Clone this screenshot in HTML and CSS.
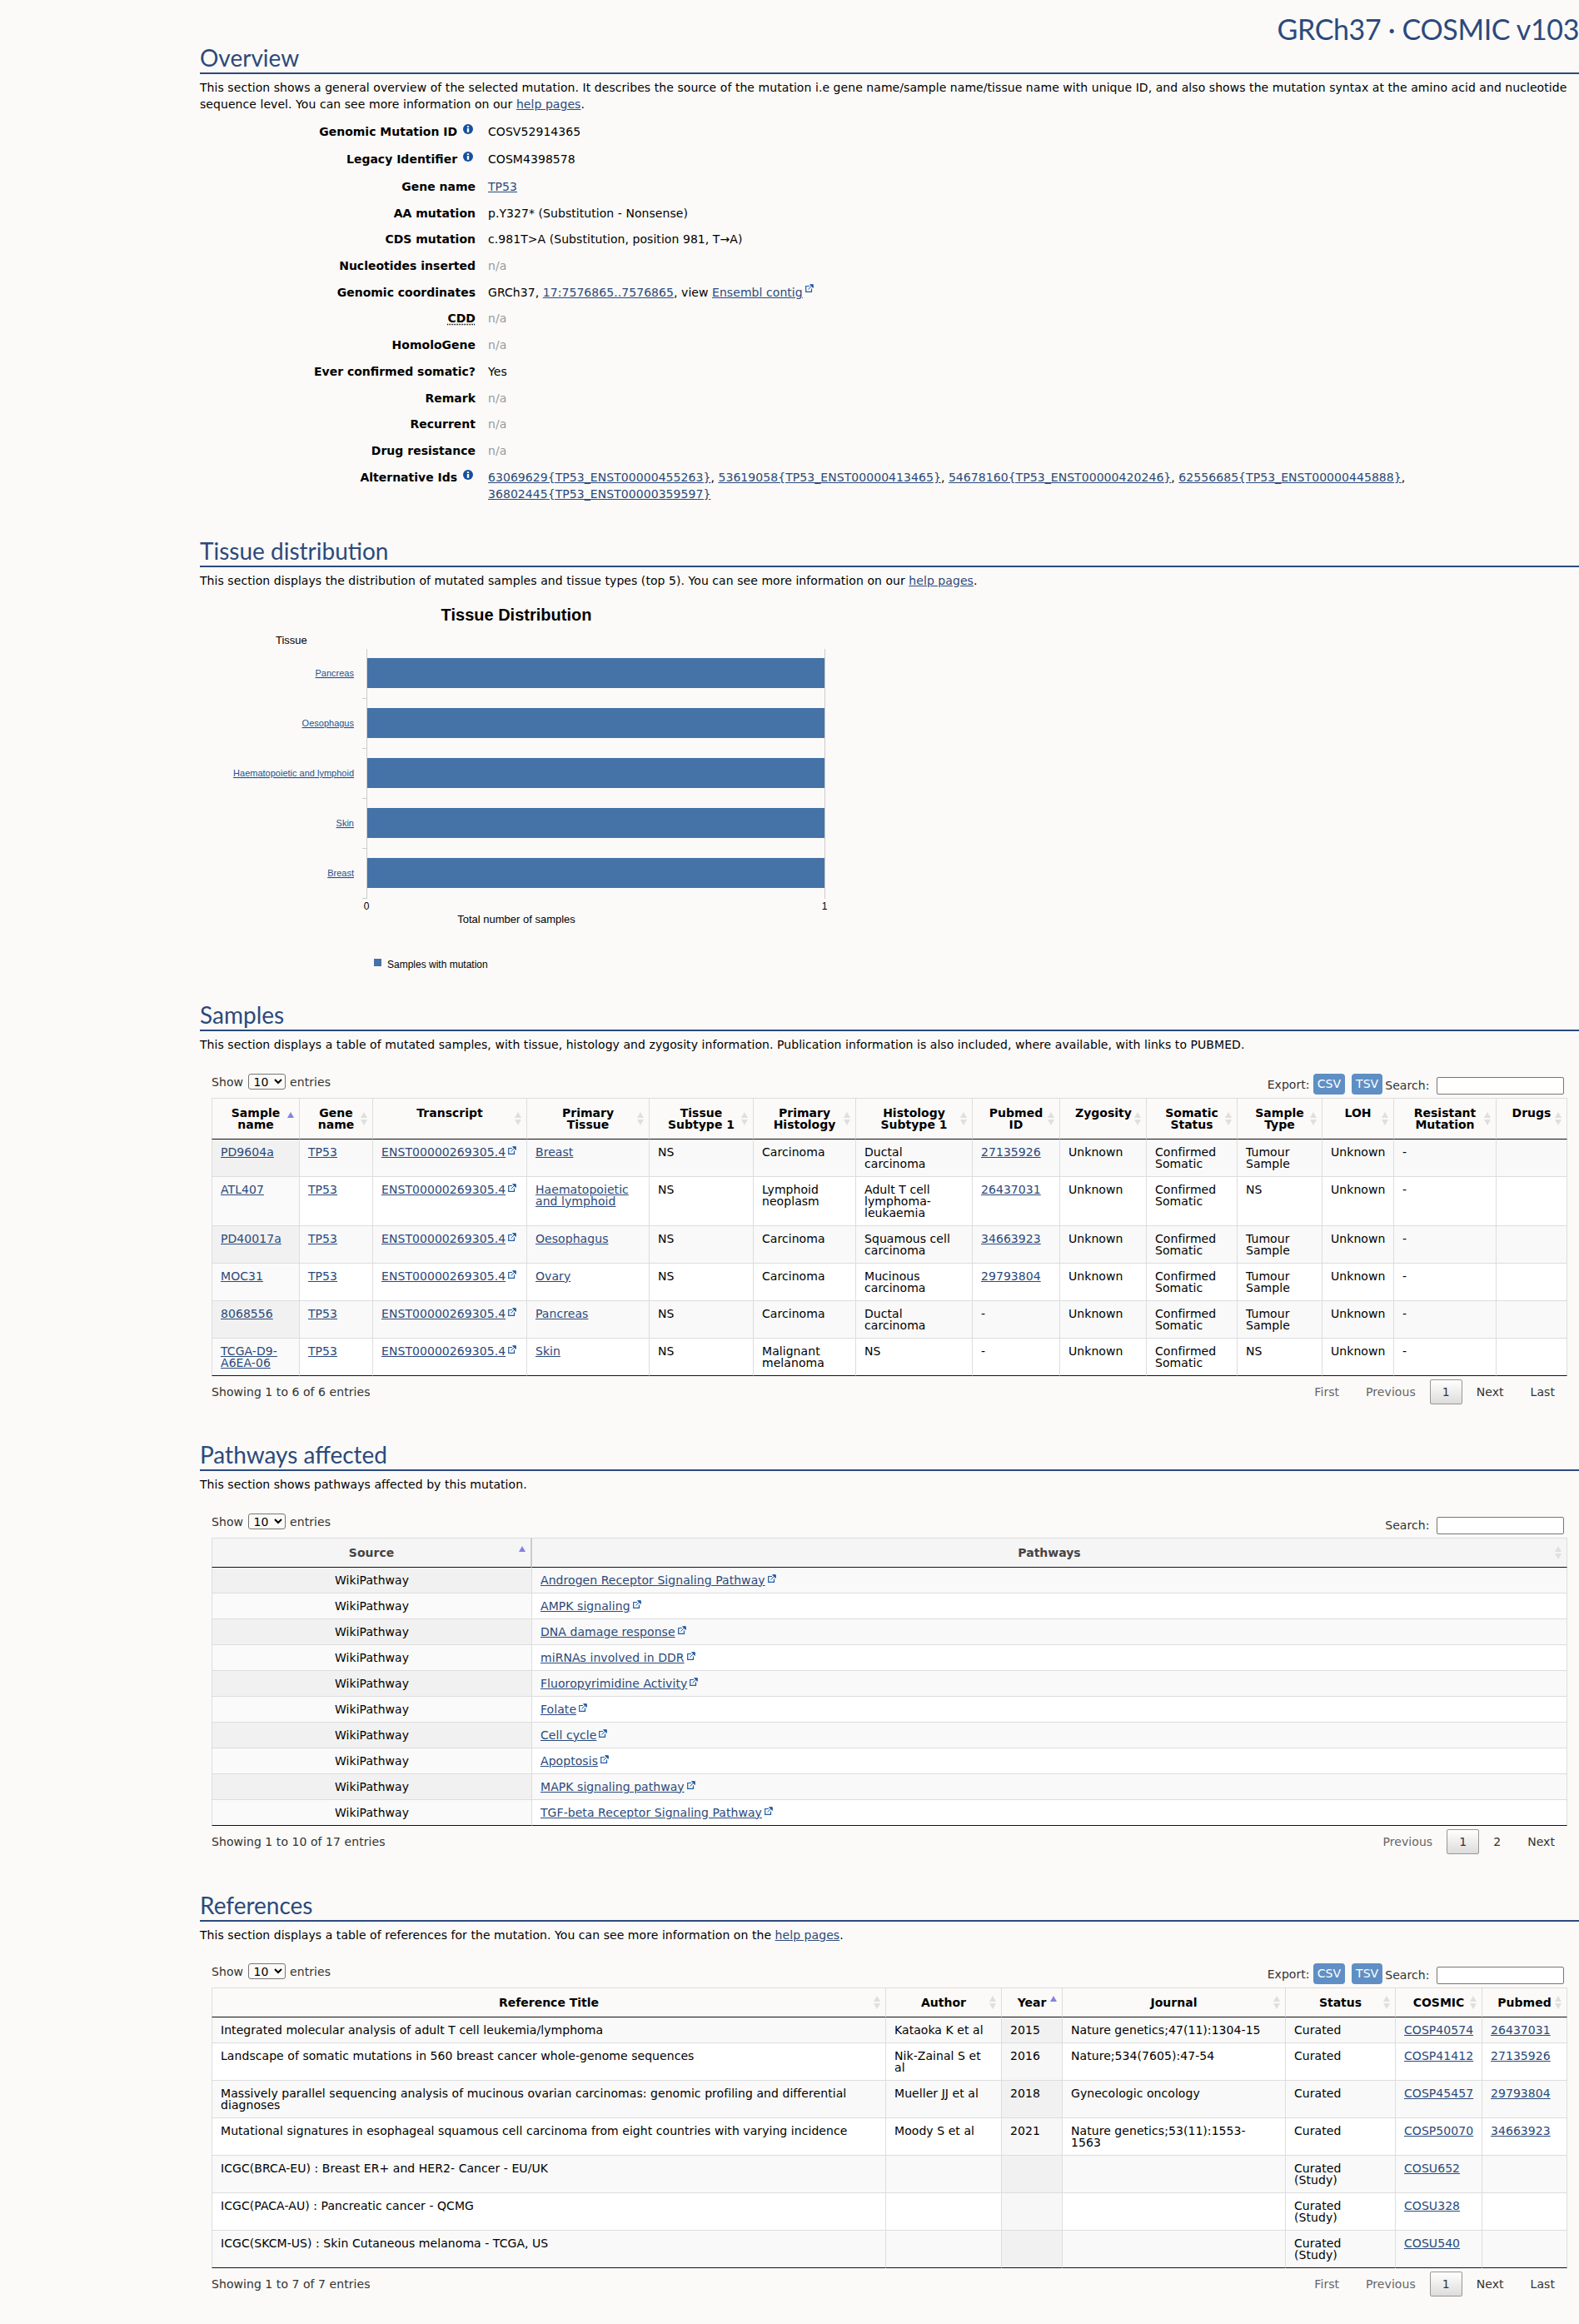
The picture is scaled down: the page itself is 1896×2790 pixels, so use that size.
FILE: index.html
```html
<!DOCTYPE html>
<html lang="en">
<head>
<meta charset="utf-8">
<title>GRCh37 · COSMIC v103</title>
<link rel="stylesheet" href="styles.css">
</head>
<body>
<svg class="defs" width="0" height="0" aria-hidden="true">
  <symbol id="ext" viewBox="0 0 10 10"><path d="M5 2.5H.7v6.8h6.8V5.5" fill="none" stroke="currentColor" stroke-width="1.2"/><path d="M3.5 6.5L8 2M5.6.7h3.7v3.7z" fill="currentColor" stroke="currentColor" stroke-width="1"/></symbol>
  <symbol id="info" viewBox="0 0 12 12"><circle cx="6" cy="6" r="6" fill="currentColor"/><path d="M4.8 2.2h2.4v1.7H4.8zM4.8 5h2.4v4.8H4.8z" fill="#fff"/></symbol>
</svg>
<main class="page">
  <div class="release"><span>GRCh37 · COSMIC v103</span></div>

  <section class="section">
    <h2 class="heading">Overview</h2>
    <p class="intro">This section shows a general overview of the selected mutation. It describes the source of the mutation i.e gene name/sample name/tissue name with unique ID, and also shows the mutation syntax at the amino acid and nucleotide sequence level. You can see more information on our <a href="#">help pages</a>.</p>
    <div class="facts">
      <div class="fact tall"><div class="fact-label">Genomic Mutation ID <svg class="i-info"><use href="#info"/></svg></div><div class="fact-value">COSV52914365</div></div>
      <div class="fact tall"><div class="fact-label">Legacy Identifier <svg class="i-info"><use href="#info"/></svg></div><div class="fact-value">COSM4398578</div></div>
      <div class="fact"><div class="fact-label">Gene name</div><div class="fact-value"><a href="#">TP53</a></div></div>
      <div class="fact"><div class="fact-label">AA mutation</div><div class="fact-value">p.Y327* (Substitution - Nonsense)</div></div>
      <div class="fact"><div class="fact-label">CDS mutation</div><div class="fact-value">c.981T&gt;A (Substitution, position 981, T→A)</div></div>
      <div class="fact"><div class="fact-label">Nucleotides inserted</div><div class="fact-value na">n/a</div></div>
      <div class="fact"><div class="fact-label">Genomic coordinates</div><div class="fact-value">GRCh37, <a href="#">17:7576865..7576865</a>, view <a href="#">Ensembl contig</a><svg class="i-ext"><use href="#ext"/></svg></div></div>
      <div class="fact"><div class="fact-label"><abbr class="abbr">CDD</abbr></div><div class="fact-value na">n/a</div></div>
      <div class="fact"><div class="fact-label">HomoloGene</div><div class="fact-value na">n/a</div></div>
      <div class="fact"><div class="fact-label">Ever confirmed somatic?</div><div class="fact-value">Yes</div></div>
      <div class="fact"><div class="fact-label">Remark</div><div class="fact-value na">n/a</div></div>
      <div class="fact"><div class="fact-label">Recurrent</div><div class="fact-value na">n/a</div></div>
      <div class="fact"><div class="fact-label">Drug resistance</div><div class="fact-value na">n/a</div></div>
      <div class="fact"><div class="fact-label">Alternative Ids <svg class="i-info"><use href="#info"/></svg></div><div class="fact-value"><a href="#">63069629{TP53_ENST00000455263}</a>, <a href="#">53619058{TP53_ENST00000413465}</a>, <a href="#">54678160{TP53_ENST00000420246}</a>, <a href="#">62556685{TP53_ENST00000445888}</a>, <a href="#">36802445{TP53_ENST00000359597}</a></div></div>
    </div>
  </section>

  <section class="section s-tissue">
    <h2 class="heading">Tissue distribution</h2>
    <p class="intro">This section displays the distribution of mutated samples and tissue types (top 5). You can see more information on our <a href="#">help pages</a>.</p>
    <svg class="chart" viewBox="240 707 800 473" width="800" height="473">
      <text class="c-title" x="620" y="745" text-anchor="middle">Tissue Distribution</text>
      <text class="c-axis" x="331" y="773">Tissue</text>
      <g class="c-bars">
        <rect x="440" y="790" width="550" height="36"/>
        <rect x="440" y="850" width="550" height="36"/>
        <rect x="440" y="910" width="550" height="36"/>
        <rect x="440" y="970" width="550" height="36"/>
        <rect x="440" y="1030" width="550" height="36"/>
      </g>
      <path class="c-grid" d="M440.5 779V1079M990.5 779V1079M435 838.5h5M435 898.5h5M435 958.5h5M435 1018.5h5M435 1078.5h5"/>
      <g class="c-links" text-anchor="end">
        <text x="425" y="812">Pancreas</text>
        <text x="425" y="872">Oesophagus</text>
        <text x="425" y="932">Haematopoietic and lymphoid</text>
        <text x="425" y="992">Skin</text>
        <text x="425" y="1052">Breast</text>
      </g>
      <text class="c-small" x="440" y="1092" text-anchor="middle">0</text>
      <text class="c-small" x="990" y="1092" text-anchor="middle">1</text>
      <text class="c-axis" x="620" y="1108" text-anchor="middle">Total number of samples</text>
      <rect class="c-legend" x="449" y="1151" width="9" height="9"/>
      <text class="c-small" x="465" y="1162">Samples with mutation</text>
    </svg>
  </section>

  <section class="section s-samples">
    <h2 class="heading">Samples</h2>
    <p class="intro">This section displays a table of mutated samples, with tissue, histology and zygosity information. Publication information is also included, where available, with links to PUBMED.</p>
    <div class="dt">
      <div class="dt-top">
        <label class="dt-length">Show <select class="dt-select"><option>10</option></select> entries</label>
        <div class="dt-tools">
          <span class="dt-export">Export:</span><a class="btn" href="#">CSV</a><a class="btn" href="#">TSV</a>
          <label class="dt-search">Search: <input class="dt-input" type="text"></label>
        </div>
      </div>
      <table class="grid t-samples">
        <thead><tr>
          <th class="sorted">Sample name</th><th>Gene name</th><th>Transcript</th><th>Primary Tissue</th><th>Tissue Subtype 1</th><th>Primary Histology</th><th>Histology Subtype 1</th><th>Pubmed ID</th><th>Zygosity</th><th>Somatic Status</th><th>Sample Type</th><th>LOH</th><th>Resistant Mutation</th><th>Drugs</th>
        </tr></thead>
        <tbody>
          <tr><td><a href="#">PD9604a</a></td><td><a href="#">TP53</a></td><td><a href="#">ENST00000269305.4</a><svg class="i-ext"><use href="#ext"/></svg></td><td><a href="#">Breast</a></td><td>NS</td><td>Carcinoma</td><td>Ductal carcinoma</td><td><a href="#">27135926</a></td><td>Unknown</td><td>Confirmed Somatic</td><td>Tumour Sample</td><td>Unknown</td><td>-</td><td></td></tr>
          <tr><td><a href="#">ATL407</a></td><td><a href="#">TP53</a></td><td><a href="#">ENST00000269305.4</a><svg class="i-ext"><use href="#ext"/></svg></td><td><a href="#">Haematopoietic and lymphoid</a></td><td>NS</td><td>Lymphoid neoplasm</td><td>Adult T cell lymphoma-leukaemia</td><td><a href="#">26437031</a></td><td>Unknown</td><td>Confirmed Somatic</td><td>NS</td><td>Unknown</td><td>-</td><td></td></tr>
          <tr><td><a href="#">PD40017a</a></td><td><a href="#">TP53</a></td><td><a href="#">ENST00000269305.4</a><svg class="i-ext"><use href="#ext"/></svg></td><td><a href="#">Oesophagus</a></td><td>NS</td><td>Carcinoma</td><td>Squamous cell carcinoma</td><td><a href="#">34663923</a></td><td>Unknown</td><td>Confirmed Somatic</td><td>Tumour Sample</td><td>Unknown</td><td>-</td><td></td></tr>
          <tr><td><a href="#">MOC31</a></td><td><a href="#">TP53</a></td><td><a href="#">ENST00000269305.4</a><svg class="i-ext"><use href="#ext"/></svg></td><td><a href="#">Ovary</a></td><td>NS</td><td>Carcinoma</td><td>Mucinous carcinoma</td><td><a href="#">29793804</a></td><td>Unknown</td><td>Confirmed Somatic</td><td>Tumour Sample</td><td>Unknown</td><td>-</td><td></td></tr>
          <tr><td><a href="#">8068556</a></td><td><a href="#">TP53</a></td><td><a href="#">ENST00000269305.4</a><svg class="i-ext"><use href="#ext"/></svg></td><td><a href="#">Pancreas</a></td><td>NS</td><td>Carcinoma</td><td>Ductal carcinoma</td><td>-</td><td>Unknown</td><td>Confirmed Somatic</td><td>Tumour Sample</td><td>Unknown</td><td>-</td><td></td></tr>
          <tr><td><a href="#">TCGA-D9-A6EA-06</a></td><td><a href="#">TP53</a></td><td><a href="#">ENST00000269305.4</a><svg class="i-ext"><use href="#ext"/></svg></td><td><a href="#">Skin</a></td><td>NS</td><td>Malignant melanoma</td><td>NS</td><td>-</td><td>Unknown</td><td>Confirmed Somatic</td><td>NS</td><td>Unknown</td><td>-</td><td></td></tr>
        </tbody>
      </table>
      <div class="dt-foot">
        <div class="dt-info">Showing 1 to 6 of 6 entries</div>
        <div class="pager"><span class="pg off">First</span><span class="pg off">Previous</span><span class="pg cur">1</span><span class="pg">Next</span><span class="pg">Last</span></div>
      </div>
    </div>
  </section>

  <section class="section s-paths">
    <h2 class="heading">Pathways affected</h2>
    <p class="intro">This section shows pathways affected by this mutation.</p>
    <div class="dt">
      <div class="dt-top">
        <label class="dt-length">Show <select class="dt-select"><option>10</option></select> entries</label>
        <div class="dt-tools"><label class="dt-search">Search: <input class="dt-input" type="text"></label></div>
      </div>
      <table class="grid t-paths">
        <thead><tr><th class="sorted">Source</th><th>Pathways</th></tr></thead>
        <tbody>
          <tr><td>WikiPathway</td><td><a href="#">Androgen Receptor Signaling Pathway</a><svg class="i-ext"><use href="#ext"/></svg></td></tr>
          <tr><td>WikiPathway</td><td><a href="#">AMPK signaling</a><svg class="i-ext"><use href="#ext"/></svg></td></tr>
          <tr><td>WikiPathway</td><td><a href="#">DNA damage response</a><svg class="i-ext"><use href="#ext"/></svg></td></tr>
          <tr><td>WikiPathway</td><td><a href="#">miRNAs involved in DDR</a><svg class="i-ext"><use href="#ext"/></svg></td></tr>
          <tr><td>WikiPathway</td><td><a href="#">Fluoropyrimidine Activity</a><svg class="i-ext"><use href="#ext"/></svg></td></tr>
          <tr><td>WikiPathway</td><td><a href="#">Folate</a><svg class="i-ext"><use href="#ext"/></svg></td></tr>
          <tr><td>WikiPathway</td><td><a href="#">Cell cycle</a><svg class="i-ext"><use href="#ext"/></svg></td></tr>
          <tr><td>WikiPathway</td><td><a href="#">Apoptosis</a><svg class="i-ext"><use href="#ext"/></svg></td></tr>
          <tr><td>WikiPathway</td><td><a href="#">MAPK signaling pathway</a><svg class="i-ext"><use href="#ext"/></svg></td></tr>
          <tr><td>WikiPathway</td><td><a href="#">TGF-beta Receptor Signaling Pathway</a><svg class="i-ext"><use href="#ext"/></svg></td></tr>
        </tbody>
      </table>
      <div class="dt-foot">
        <div class="dt-info">Showing 1 to 10 of 17 entries</div>
        <div class="pager"><span class="pg off">Previous</span><span class="pg cur">1</span><span class="pg">2</span><span class="pg">Next</span></div>
      </div>
    </div>
  </section>

  <section class="section s-refs">
    <h2 class="heading">References</h2>
    <p class="intro">This section displays a table of references for the mutation. You can see more information on the <a href="#">help pages</a>.</p>
    <div class="dt">
      <div class="dt-top">
        <label class="dt-length">Show <select class="dt-select"><option>10</option></select> entries</label>
        <div class="dt-tools">
          <span class="dt-export">Export:</span><a class="btn" href="#">CSV</a><a class="btn" href="#">TSV</a>
          <label class="dt-search">Search: <input class="dt-input" type="text"></label>
        </div>
      </div>
      <table class="grid t-refs">
        <thead><tr><th>Reference Title</th><th>Author</th><th class="sorted">Year</th><th>Journal</th><th>Status</th><th>COSMIC</th><th>Pubmed</th></tr></thead>
        <tbody>
          <tr><td>Integrated molecular analysis of adult T cell leukemia/lymphoma</td><td>Kataoka K et al</td><td>2015</td><td>Nature genetics;47(11):1304-15</td><td>Curated</td><td><a href="#">COSP40574</a></td><td><a href="#">26437031</a></td></tr>
          <tr><td>Landscape of somatic mutations in 560 breast cancer whole-genome sequences</td><td>Nik-Zainal S et al</td><td>2016</td><td>Nature;534(7605):47-54</td><td>Curated</td><td><a href="#">COSP41412</a></td><td><a href="#">27135926</a></td></tr>
          <tr><td>Massively parallel sequencing analysis of mucinous ovarian carcinomas: genomic profiling and differential diagnoses</td><td>Mueller JJ et al</td><td>2018</td><td>Gynecologic oncology</td><td>Curated</td><td><a href="#">COSP45457</a></td><td><a href="#">29793804</a></td></tr>
          <tr><td>Mutational signatures in esophageal squamous cell carcinoma from eight countries with varying incidence</td><td>Moody S et al</td><td>2021</td><td>Nature genetics;53(11):1553-<br>1563</td><td>Curated</td><td><a href="#">COSP50070</a></td><td><a href="#">34663923</a></td></tr>
          <tr><td>ICGC(BRCA-EU) : Breast ER+ and HER2- Cancer - EU/UK</td><td></td><td></td><td></td><td>Curated (Study)</td><td><a href="#">COSU652</a></td><td></td></tr>
          <tr><td>ICGC(PACA-AU) : Pancreatic cancer - QCMG</td><td></td><td></td><td></td><td>Curated (Study)</td><td><a href="#">COSU328</a></td><td></td></tr>
          <tr><td>ICGC(SKCM-US) : Skin Cutaneous melanoma - TCGA, US</td><td></td><td></td><td></td><td>Curated (Study)</td><td><a href="#">COSU540</a></td><td></td></tr>
        </tbody>
      </table>
      <div class="dt-foot">
        <div class="dt-info">Showing 1 to 7 of 7 entries</div>
        <div class="pager"><span class="pg off">First</span><span class="pg off">Previous</span><span class="pg cur">1</span><span class="pg">Next</span><span class="pg">Last</span></div>
      </div>
    </div>
  </section>
</main>
</body>
</html>
```
FILE: styles.css
```css
* { box-sizing: border-box; }
html, body { margin: 0; padding: 0; }
body {
  background: #fbfaf8;
  color: #000;
  font: 14px/20px "DejaVu Sans", Verdana, sans-serif;
  letter-spacing: .06px;
  height: 2790px;
  overflow-x: hidden;
}
a { color: #2b4a7b; text-decoration: underline; }
.defs { position: absolute; }
.page { margin-left: 240px; width: 1656px; }

.release {
  display: flex;
  justify-content: flex-end;
  height: 51px;
  padding: 19px 0 0 0;
  font: 400 34px/32px Lato, sans-serif;
  letter-spacing: -.35px;
  color: #2c4a7c;
}
.heading {
  margin: 0;
  height: 38px;
  font: 400 28px/36px Lato, sans-serif;
  letter-spacing: 0;
  color: #2c4a7c;
  border-bottom: 2px solid #2c4a7c;
}
.intro { margin: 6px 0 0; }

.facts { margin-top: 13px; }
.fact { display: flex; gap: 15px; min-height: 31.7px; }
.fact.tall { min-height: 33px; }
.fact-label { width: 331px; flex: none; text-align: right; font-weight: 700; letter-spacing: 0; }
.fact-value { flex: 1; min-width: 0; }
.na { color: #999; }
.abbr { text-decoration: underline dotted; }
.i-info { width: 12px; height: 12px; margin-left: 2px; margin-right: 3px; vertical-align: 2px; color: #15509f; }
.i-ext { width: 10px; height: 10px; margin-left: 3px; vertical-align: top; color: #1f5ba3; }

.s-tissue { margin-top: 40px; }
.chart { display: block; margin-top: 0; }
.chart text { font-family: "Liberation Sans", Arial, sans-serif; letter-spacing: 0; }
.c-title { font-size: 20px; font-weight: 700; }
.c-axis { font-size: 13px; }
.c-small { font-size: 12px; }
.c-bars rect, .c-legend { fill: #4572a7; }
.c-grid { stroke: #ccc; fill: none; }
.c-links text { font-size: 11px; fill: #1d5391; text-decoration: underline; }

.s-samples { margin-top: 20px; }
.s-paths { margin-top: 42px; }
.s-refs { margin-top: 43px; }

.dt { margin: 25px 14px 0; width: 1628px; color: #333; }
.s-refs .dt { margin-top: 24px; }
.dt-top { display: flex; justify-content: space-between; height: 29px; }
.dt-length { line-height: 19px; }
.dt-select {
  width: 45px;
  height: 19px;
  padding: 0 0 0 2px;
  margin: 0 1px;
  background: #fbfaf8;
  border: 1px solid #767676;
  border-radius: 3px;
  font: 14px "DejaVu Sans", Verdana, sans-serif;
  color: #000;
}
.dt-tools { display: flex; align-items: flex-start; margin-right: 4px; }
.dt-export { line-height: 26px; margin-right: 4px; }
.btn {
  height: 25px;
  line-height: 25px;
  padding: 0 5px;
  margin-right: 8px;
  border-radius: 4px;
  background: #5f8fc4;
  color: #fff;
  text-decoration: none;
}
.btn + .btn { margin-right: 3px; }
.dt-search { line-height: 28px; display: flex; align-items: flex-start; gap: 4px; white-space: pre; }
.dt-input {
  width: 153px;
  height: 21px;
  margin-top: 4px;
  padding: 0;
  background: #fff;
  border: 1px solid #767676;
  border-radius: 2px;
}

.grid { width: 1628px; table-layout: fixed; border-collapse: separate; border-spacing: 0; color: #000; line-height: 14px; }
.grid th {
  position: relative;
  padding: 10px 18px;
  vertical-align: top;
  font-weight: 700;
  letter-spacing: 0;
  text-align: center;
  border-top: 1px solid #ddd;
  border-right: 1px solid #ddd;
  border-bottom: 1px solid #111;
}
.grid td {
  padding: 8px 10px;
  vertical-align: top;
  border-right: 1px solid #ddd;
  border-bottom: 1px solid #ddd;
  background: #fff;
}
.grid th:first-child, .grid td:first-child { border-left: 1px solid #ddd; }
.grid tbody tr:nth-child(odd) td { background: #f9f9f9; }
.grid tbody tr:last-child td { border-bottom-color: #111; }

.grid th::before, .grid th::after {
  content: "";
  position: absolute;
  right: 6px;
  border-left: 4.5px solid transparent;
  border-right: 4.5px solid transparent;
}
.grid th::before { top: calc(50% - 8px); border-bottom: 7px solid #dfdfdf; }
.grid th::after { top: calc(50% + 1px); border-top: 7px solid #dfdfdf; }
.grid th.sorted::before { top: calc(50% - 8px); border-bottom-color: #8383e0; }
.grid th.sorted::after { display: none; }

.t-samples th:nth-child(1) { width: 106px; }
.t-samples th:nth-child(2) { width: 88px; }
.t-samples th:nth-child(3) { width: 185px; }
.t-samples th:nth-child(4) { width: 147px; }
.t-samples th:nth-child(5) { width: 125px; }
.t-samples th:nth-child(6) { width: 123px; }
.t-samples th:nth-child(7) { width: 140px; }
.t-samples th:nth-child(8) { width: 105px; }
.t-samples th:nth-child(9) { width: 104px; }
.t-samples th:nth-child(10) { width: 109px; }
.t-samples th:nth-child(11) { width: 102px; }
.t-samples th:nth-child(12) { width: 86px; }
.t-samples th:nth-child(13) { width: 123px; }
.t-samples th:nth-child(14) { width: 85px; }
.t-samples tbody tr:nth-child(odd) td:first-child { background: #f1f1f1; }
.t-samples tbody tr:nth-child(even) td:first-child { background: #fafafa; }

.t-paths th:nth-child(1) { width: 385px; }
.t-paths th { background: #f5f5f5; color: #444; }
.t-paths th:first-child { border-right: 2px solid #ccc; }
.t-paths td:first-child { text-align: center; }
.t-paths tbody tr:nth-child(odd) td:first-child { background: #f1f1f1; }
.t-paths tbody tr:nth-child(even) td:first-child { background: #fafafa; }

.t-refs th:nth-child(1) { width: 810px; }
.t-refs th:nth-child(2) { width: 139px; }
.t-refs th:nth-child(3) { width: 73px; }
.t-refs th:nth-child(4) { width: 268px; }
.t-refs th:nth-child(5) { width: 132px; }
.t-refs th:nth-child(6) { width: 104px; }
.t-refs th:nth-child(7) { width: 102px; }
.t-refs tbody tr:nth-child(odd) td:nth-child(3) { background: #f1f1f1; }
.t-refs tbody tr:nth-child(even) td:nth-child(3) { background: #f7f7f7; }

.dt-foot { display: flex; justify-content: space-between; padding-top: 4px; }
.dt-info { line-height: 30px; }
.pager { display: flex; }
.pg { height: 30px; padding: 0 14px; margin-left: 2px; border: 1px solid transparent; border-radius: 2px; line-height: 28px; color: #333; }
.pg.off { color: #666; }
.pg.cur { border-color: #979797; background: linear-gradient(#fff, #dcdcdc); }
```
